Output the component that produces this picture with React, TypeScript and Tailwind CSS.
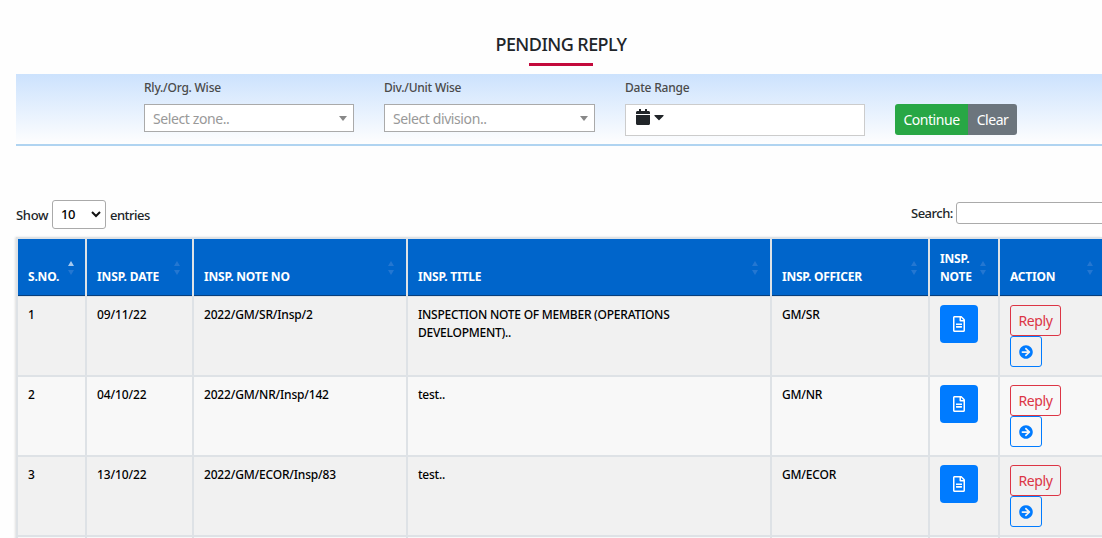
import { FaArrowCircleRight, FaCalendar, FaCaretDown, FaRegFileAlt } from 'react-icons/fa';

const GRID = 'grid w-[1090px] grid-cols-[69px_107px_214px_364px_158px_70px_108px]';

const headers = [
  { label: 'S.NO.', arrow: 'right-[10px]', tracking: 'tracking-[-0.2px]' },
  { label: 'INSP. DATE', arrow: 'right-[11px]', tracking: 'tracking-[-0.1px]' },
  { label: 'INSP. NOTE NO', arrow: 'right-[11px]', tracking: 'tracking-[-0.2px]' },
  { label: 'INSP. TITLE', arrow: 'right-[11px]', tracking: 'tracking-[-0.2px]' },
  { label: 'INSP. OFFICER', arrow: 'right-[10px]', tracking: 'tracking-[-0.25px]' },
  { label: 'INSP. NOTE', arrow: 'right-[11px]', tracking: 'tracking-[-0.2px]' },
  { label: 'ACTION', arrow: 'right-[12px]', tracking: 'tracking-[-0.2px]' },
];

const tracking = ['', 'tracking-[-0.1px]', 'tracking-[-0.18px]', 'tracking-[-0.24px]', 'tracking-[-0.2px]'];

const rows = [
  { no: '1', date: '09/11/22', note: '2022/GM/SR/Insp/2', title: 'INSPECTION NOTE OF MEMBER (OPERATIONS DEVELOPMENT)..', officer: 'GM/SR' },
  { no: '2', date: '04/10/22', note: '2022/GM/NR/Insp/142', title: 'test..', officer: 'GM/NR' },
  { no: '3', date: '13/10/22', note: '2022/GM/ECOR/Insp/83', title: 'test..', officer: 'GM/ECOR' },
];

function SortArrows({ active, place }: { active: boolean; place: string }) {
  return (
    <svg className={`absolute top-[21px] ${place}`} width="8" height="16" viewBox="0 0 8 16">
      <path d="M1 6 L4 1 L7 6Z" fill={active ? '#a6c9ee' : '#2477d1'} />
      <path d="M1 10 L4 15 L7 10Z" fill="#2477d1" />
    </svg>
  );
}

function FieldLabel({ text }: { text: string }) {
  return <div className="h-[30px] pt-[5px] text-[12px] leading-[18px] font-medium tracking-[-0.22px] text-[#4a4a4a]">{text}</div>;
}

function SelectBox({ label, text, width }: { label: string; text: string; width: string }) {
  return (
    <div className={width}>
      <FieldLabel text={label} />
      <div className="flex h-7 items-center justify-between border border-[#aaa] bg-white pt-px pr-[6px] pl-2 text-[14px] text-[#999]">
        <span className="tracking-[-0.4px]">{text}</span>
        <span className="h-0 w-0 border-x-4 border-t-[5px] border-x-transparent border-t-[#888]" />
      </div>
    </div>
  );
}

export default function App() {
  return (
    <div className="h-[538px] w-[1102px] overflow-hidden bg-[#fefefe] pl-4 font-['Noto_Sans',sans-serif] text-[#212529]">
      <header className="flex h-[74px] flex-col items-center">
        <h1 className="mt-[32px] ml-[4px] h-[31px] text-[18px] leading-[25px] font-medium tracking-[-0.55px]">PENDING REPLY</h1>
        <div className="ml-[4px] h-[3px] w-16 bg-[#c3093b]" />
      </header>

      <section className="flex h-[72px] border-b-2 border-[#b0d4f1] bg-linear-to-b from-[#cce2fd] to-[#fefefe] pl-[128px]">
        <SelectBox label="Rly./Org. Wise" text="Select zone.." width="mr-[30px] w-[210px]" />
        <SelectBox label="Div./Unit Wise" text="Select division.." width="mr-[30px] w-[211px]" />
        <div className="w-[240px]">
          <FieldLabel text="Date Range" />
          <div className="flex h-8 gap-1 border border-[#ccc] bg-white pt-[4px] pl-[10px]">
            <FaCalendar size={16} className="w-[14px]" />
            <FaCaretDown size={16} className="w-[10px]" />
          </div>
        </div>
        <div className="mt-[30px] ml-[30px] flex h-[31px] text-[14px] leading-[32px] tracking-[-0.45px] text-white">
          <button className="w-[73px] rounded-l-[3px] bg-[#28a745]">Continue</button>
          <button className="w-[49px] rounded-r-[3px] bg-[#6c757d]">Clear</button>
        </div>
      </section>

      <div className="flex h-[91px] items-start pt-[54px] text-[13px] font-medium tracking-[-0.5px]">
        <span className="w-9 pt-[5px] leading-[20px] tracking-[-0.3px]">Show</span>
        <div className="flex h-[29px] w-[54px] items-center justify-between rounded-[3px] border border-[#aaa] bg-white pt-px pr-[4px] pl-[8px] text-black">
          <span>10</span>
          <svg className="-mt-px" width="10" height="7" viewBox="0 0 10 7" fill="none" stroke="#111" strokeWidth="2"><path d="M1 1l4 4 4-4" /></svg>
        </div>
        <span className="ml-1 pt-[5px] leading-[20px]">entries</span>
        <span className="ml-auto w-[45px] pt-[3px] leading-[20px]">Search:</span>
        <div className="-mr-2 mt-[2px] h-[22px] w-[154px] rounded-[3px] border border-[#aaa] bg-white" />
      </div>

      <main className="shadow-[-1px_0_2px_rgba(0,0,0,0.12)]">
        <div className={`${GRID} border-t-2 border-[#dee2e6] text-[12px] leading-[18px] font-bold text-white`}>
          {headers.map((h, i) => (
            <div key={h.label} className="flex h-[58px] border-b border-l-2 border-[#dee2e6]">
              <div className="relative flex flex-1 items-end border-b border-[#073f7d] bg-[#0065cb] pr-[24px] pb-[9px] pl-[10px]">
                <span className={h.tracking}>{h.label}</span>
                <SortArrows active={i === 0} place={h.arrow} />
              </div>
            </div>
          ))}
        </div>
        {rows.map((r, i) => (
          <div key={r.no} className={`${GRID} ${i % 2 ? 'bg-[#f8f8f8]' : 'bg-[#f1f1f1]'} text-[12px] leading-[18px] text-black`}>
            {[r.no, r.date, r.note, r.title, r.officer].map((text, j) => (
              <div key={j} className={`h-20 border-b-2 border-l-2 border-[#dee2e6] pt-[9px] pl-[10px] font-medium whitespace-nowrap ${tracking[j]}`}>
                {j === 3 ? <div className="w-[290px] whitespace-normal">{text}</div> : text}
              </div>
            ))}
            <div className="border-b-2 border-l-2 border-[#dee2e6] pt-[8px] pl-[10px]">
              <button className="flex h-[38px] w-[38px] items-center justify-center rounded-[4px] bg-[#007bff] text-white">
                <FaRegFileAlt size={16} />
              </button>
            </div>
            <div className="flex flex-col border-b-2 border-l-2 border-[#dee2e6] pt-[8px] pl-[10px] text-[14px]">
              <button className="h-[31px] w-[51px] rounded-[3px] border border-[#dc3545] pt-px tracking-[-0.4px] text-[#dc3545]">Reply</button>
              <button className="flex h-[31px] w-8 items-center justify-center rounded-[3px] border border-[#007bff] text-[#007bff]">
                <FaArrowCircleRight size={14} />
              </button>
            </div>
          </div>
        ))}
        <div className={`${GRID} h-1 bg-[#f8f8f8]`}>
          {headers.map((h) => <div key={h.label} className="border-l-2 border-[#dee2e6]" />)}
        </div>
      </main>
    </div>
  );
}
